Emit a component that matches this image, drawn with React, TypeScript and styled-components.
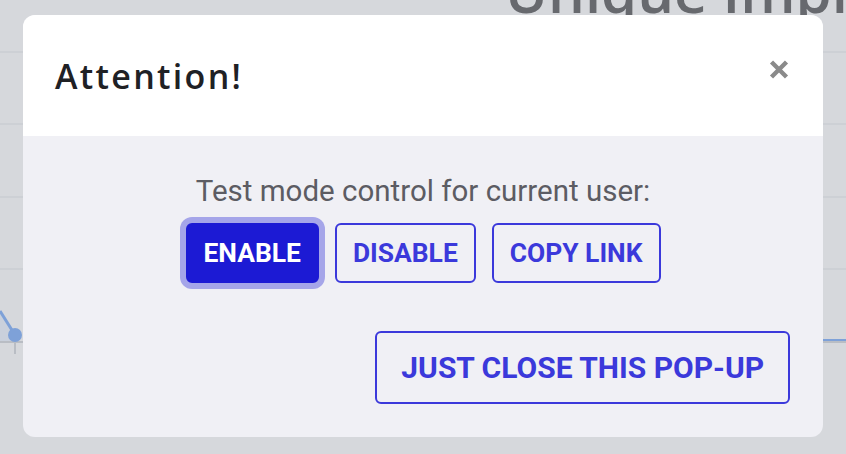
import styled, { createGlobalStyle } from "styled-components"

const GlobalStyle = createGlobalStyle`
  html, body {
    margin: 0;
    padding: 0;
    background: #d6d8dc;
    overflow: hidden;
  }
  body {
    font-family: Roboto, "Liberation Sans", sans-serif;
  }
`

const Page = styled.div`
  width: 846px;
  height: 454px;
  overflow: hidden;
`

const PageTitle = styled.h1`
  margin: -38px 0 0 505px;
  font-family: "Open Sans", sans-serif;
  font-weight: 600;
  font-size: 58px;
  line-height: 1;
  color: #67696e;
  white-space: nowrap;
`

const Chart = styled.svg`
  display: block;
  margin-top: -20px;
`

const Overlay = styled.div`
  position: fixed;
  inset: 0;
  display: flex;
  align-items: flex-start;
  justify-content: center;
  padding-top: 15px;
`

const Modal = styled.div`
  width: 800px;
  border-radius: 12px;
  overflow: hidden;
  background: #f0f0f5;
`

const Header = styled.div`
  height: 121px;
  background: #fff;
  display: flex;
  align-items: center;
  justify-content: space-between;
  padding: 0 34px 0 32px;
  box-sizing: border-box;
`

const Title = styled.h2`
  margin: 0;
  font-family: "Open Sans", sans-serif;
  font-weight: 600;
  font-size: 34px;
  letter-spacing: 2.3px;
  color: #1f2125;
`

const CloseButton = styled.button`
  align-self: flex-start;
  margin-top: 44px;
  border: none;
  background: none;
  padding: 0;
  width: 20px;
  height: 21px;
  cursor: pointer;
  display: flex;
`

const Body = styled.div`
  padding: 38px 33px 33px;
  display: flex;
  flex-direction: column;
  align-items: center;
`

const Prompt = styled.p`
  margin: 0;
  font-size: 29.5px;
  line-height: 35px;
  color: #5c5c63;
`

const ButtonRow = styled.div`
  display: flex;
  gap: 16px;
  margin-top: 14px;
`

const Btn = styled.button<{ $primary?: boolean; $big?: boolean }>`
  box-sizing: border-box;
  height: ${(p) => (p.$big ? "73px" : "60px")};
  padding: 0 ${(p) => (p.$big ? "24px" : "16px")};
  border-radius: 6px;
  border: 2px solid ${(p) => (p.$primary ? "#1c1ad4" : "#3b39db")};
  background: ${(p) => (p.$primary ? "#1c1ad4" : "transparent")};
  color: ${(p) => (p.$primary ? "#fff" : "#3b39db")};
  font-family: Roboto, "Liberation Sans", sans-serif;
  font-weight: 700;
  font-size: ${(p) => (p.$big ? "30px" : "26.4px")};
  text-transform: uppercase;
  box-shadow: ${(p) => (p.$primary ? "0 0 0 6px #a5a5e9" : "none")};
  cursor: pointer;
`

const Footer = styled.div`
  align-self: stretch;
  display: flex;
  justify-content: flex-end;
  margin-top: 48px;
`

function CloseIcon() {
  return (
    <svg width="20" height="21" viewBox="0 0 20 21">
      <path d="M2.5 3 L17.5 18 M17.5 3 L2.5 18" stroke="#8a8a8a" strokeWidth="4.4" strokeLinecap="butt" />
    </svg>
  )
}

export default function App() {
  return (
    <>
      <GlobalStyle />
      <Page>
        <PageTitle>Unique Impressions</PageTitle>
        <Chart width="846" height="454" viewBox="0 0 846 454">
          {[52, 124, 197, 269].map((y) => (
            <line key={y} x1="0" x2="846" y1={y} y2={y} stroke="#cdd0d5" strokeWidth="2" />
          ))}
          <path d="M0 310 L15 335 L15 342 L0 342 Z" fill="#c9d0dc" />
          <line x1="0" x2="846" y1="342" y2="342" stroke="#b9bdc4" strokeWidth="2" />
          <line x1="15" x2="15" y1="342" y2="354" stroke="#b9bdc4" strokeWidth="2" />
          <line x1="780" x2="846" y1="340" y2="340" stroke="#7ea1d8" strokeWidth="2" />
          <path d="M0 311 L15 335" stroke="#7ea1d8" strokeWidth="3" fill="none" />
          <circle cx="15" cy="335" r="7" fill="#7ea1d8" />
        </Chart>
      </Page>
      <Overlay>
        <Modal>
          <Header>
            <Title>Attention!</Title>
            <CloseButton aria-label="Close">
              <CloseIcon />
            </CloseButton>
          </Header>
          <Body>
            <Prompt>Test mode control for current user:</Prompt>
            <ButtonRow>
              <Btn $primary>Enable</Btn>
              <Btn>Disable</Btn>
              <Btn>Copy link</Btn>
            </ButtonRow>
            <Footer>
              <Btn $big>Just close this pop-up</Btn>
            </Footer>
          </Body>
        </Modal>
      </Overlay>
    </>
  )
}
